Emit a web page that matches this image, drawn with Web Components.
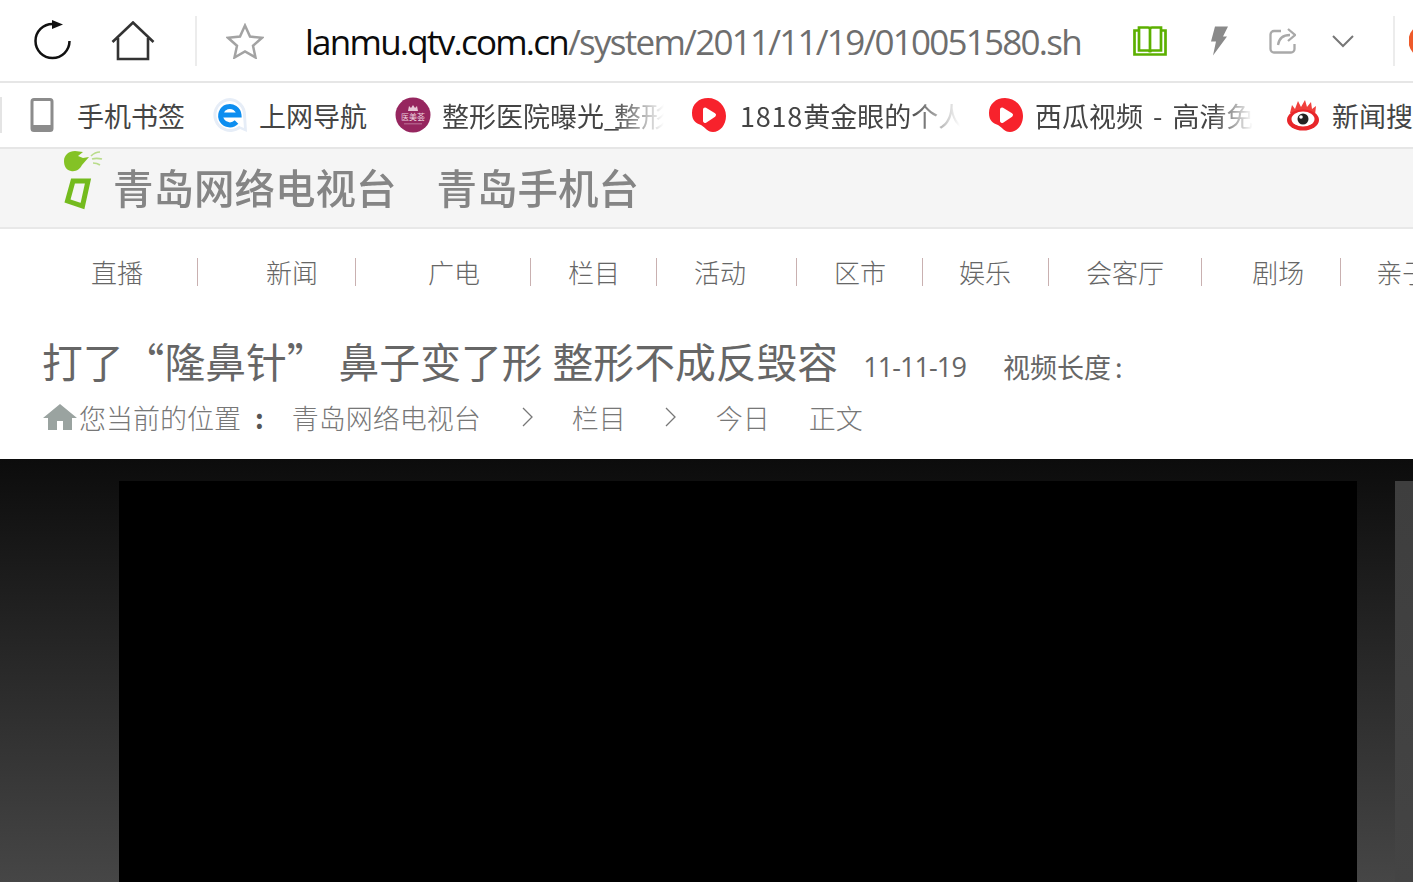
<!DOCTYPE html>
<html lang="zh-CN">
<head>
<meta charset="utf-8">
<title>青岛网络电视台</title>
<style>
html,body{margin:0;height:882px;overflow:hidden;background:#fff}
body{font-family:"Noto Sans CJK SC","Noto Sans",sans-serif}
</style>
</head>
<body>
<browser-bar></browser-bar>
<bookmark-bar>
  <book-mark label="手机书签" gap="23" width="108" after="27"><svg viewBox="0 0 24 34" width="24" height="34"><rect x="2" y="1.500" width="20" height="31" rx="2" fill="none" stroke="#8c8c8c" stroke-width="3"/><rect x="2" y="27" width="20" height="5" rx="1" fill="#8c8c8c"/></svg></book-mark>
  <book-mark label="上网导航" gap="11" width="108" after="28"><svg viewBox="0 0 36 36" width="36" height="36"><path d="M18 1a17 17 0 1 0 10 31l7 3-1-17A17 17 0 0 0 18 1z" fill="#e6edf7"/><path d="M18 4a14 14 0 1 0 9 25l5 2-1-13A14 14 0 0 0 18 4z" fill="#fff"/><path d="M8.500 18H27A9.200 9.200 0 1 0 24.500 25" fill="none" stroke="#0d8ef0" stroke-width="5"/></svg></book-mark>
  <book-mark label="整形医院曝光&lt;span style=&quot;letter-spacing:-5px&quot;&gt;_&lt;/span&gt;整形外科" gap="11" width="222" after="27" fade="50"><svg viewBox="0 0 36 36" width="36" height="36"><circle cx="18" cy="18" r="17.500" fill="#96265f"/><path d="M13 14l1-5 2 2 2-3 2 3 2-2 1 5z" fill="#e8c9d8"/><text x="18" y="23" text-anchor="middle" font-size="8" fill="#ecd0de" font-family="Noto Sans CJK SC">医美荟</text><rect x="9" y="26" width="18" height="1.500" fill="#c98fae" opacity=".5"/></svg></book-mark>
  <book-mark label="&lt;span style=&quot;letter-spacing:.8px&quot;&gt;1818&lt;/span&gt;黄金眼的个人" gap="13" width="220" after="28" fade="50"><svg viewBox="0 0 36 38" width="36" height="38"><path d="M17 2C27 2 35 10 35 20C35 29 29 36 22 36C16 36 14 31 10 29C5 27 1 25 1 17C1 8 8 2 17 2z" fill="#f7222c"/><path d="M14 13.500l9 5.500-9 6z" fill="#fff" stroke="#fff" stroke-width="4" stroke-linejoin="round"/></svg></book-mark>
  <book-mark label="西瓜视频 - 高清免费" gap="11" width="218" after="33" fade="40"><svg viewBox="0 0 36 38" width="36" height="38"><path d="M17 2C27 2 35 10 35 20C35 29 29 36 22 36C16 36 14 31 10 29C5 27 1 25 1 17C1 8 8 2 17 2z" fill="#f7222c"/><path d="M14 13.500l9 5.500-9 6z" fill="#fff" stroke="#fff" stroke-width="4" stroke-linejoin="round"/></svg></book-mark>
  <book-mark label="新闻搜索" gap="12" width="108" after="0"><svg viewBox="0 0 34 32" width="34" height="32"><path d="M4 14L6 6l3 4 3-8 3 6 4-7 2 7 4-5 1 7 4-3-1 9z" fill="#f0403c"/><ellipse cx="17" cy="21" rx="16" ry="10.500" fill="#e8262a"/><ellipse cx="17" cy="20" rx="11.500" ry="7.500" fill="#fff"/><circle cx="17" cy="20" r="5.500" fill="#222"/><circle cx="15" cy="18" r="1.800" fill="#fff"/></svg></book-mark>
</bookmark-bar>
<logo-bar></logo-bar>
<site-nav></site-nav>
<article-head></article-head>
<video-stage></video-stage>

<script>
class BrowserBar extends HTMLElement{
  constructor(){
    super();
    this.attachShadow({mode:"open"}).innerHTML=`
    <style>
    :host{display:flex;align-items:center;height:81px;border-bottom:2px solid #e6e6e6;background:#fff;overflow:hidden}
    svg{flex:none;display:block}
    .sep{flex:none;width:2px;height:50px;background:#ececec}
    .url{flex:none;width:776px;margin-left:41px;padding-top:2px;overflow:hidden;white-space:nowrap;font:35px/48px "Open Sans","Noto Sans",sans-serif;letter-spacing:-1.750px;color:#0c0c0c}
    .url span{color:#6e6e6e}
    </style>
    <svg style="margin-left:34px" width="38" height="42" viewBox="0 0 38 42"><path d="M18.500 4A17 17 0 1 0 35.500 21" fill="none" stroke="#111" stroke-width="2.500"/><path d="M18 0l11 4.500L18 9z" fill="#111"/></svg>
    <svg style="margin-left:39px" width="44" height="40" viewBox="0 0 44 40"><path d="M1.500 21L22 1.500 42.500 21M7 17v21h30V17" fill="none" stroke="#333" stroke-width="2.600"/></svg>
    <div class="sep" style="margin-left:40px"></div>
    <svg style="margin-left:29px" width="38" height="36" viewBox="0 0 38 36"><path d="M19 2.500l5 11 12 1.300-9 8 2.500 11.700L19 28.500 8.500 34.500 11 22.800l-9-8 12-1.300z" fill="none" stroke="#a3a3a3" stroke-width="2.500"/></svg>
    <div class="url">lanmu.qtv.com.cn<span>/system/2011/11/19/010051580.shtml</span></div>
    <svg style="margin-left:52px" width="34" height="30" viewBox="0 0 34 30"><path d="M6 4.500V1.500h9c1 0 2 .6 2 2 0-1.400 1-2 2-2h9v3M6 4.500H1.500v24H32.500v-24H28M6 4.500v20h9c1 0 2 1 2 2 0-1 1-2 2-2h9v-20M17 3.500v23" fill="none" stroke="#5cb000" stroke-width="2.700"/></svg>
    <svg style="margin-left:43px" width="18" height="30" viewBox="0 0 18 30"><path d="M5 .500h13l-5 10h4L3 29.500l3-14H1z" fill="#8a8a8a"/></svg>
    <svg style="margin-left:41px" width="27" height="27" viewBox="0 0 27 27"><path d="M12 4H5a3.500 3.500 0 0 0-3.500 3.500V22A3.500 3.500 0 0 0 5 25.500h17a3.500 3.500 0 0 0 3.500-3.500v-5" fill="none" stroke="#a9a9a9" stroke-width="2.300"/><path d="M9 18c1-7 6-10 12-10" fill="none" stroke="#a9a9a9" stroke-width="2.300"/><path d="M19 2l7 6-7 6" fill="none" stroke="#a9a9a9" stroke-width="2.300"/></svg>
    <svg style="margin-left:36px" width="22" height="14" viewBox="0 0 22 14"><path d="M1 2l10 10L21 2" fill="none" stroke="#777" stroke-width="2"/></svg>
    <div class="sep" style="margin-left:39px"></div>
    <svg style="margin-left:14px;flex:none" width="20" height="34" viewBox="0 0 20 34"><circle cx="17" cy="17" r="15" fill="none" stroke="#ee5a2a" stroke-width="5"/></svg>`;
  }
}

class BookmarkBar extends HTMLElement{
  constructor(){
    super();
    this.attachShadow({mode:"open"}).innerHTML=`
    <style>
    :host{display:flex;align-items:center;height:64px;border-bottom:2px solid #e6e6e6;background:#fff;overflow:hidden;white-space:nowrap}
    .sep{flex:none;width:2px;height:36px;background:#e4e4e4;margin-right:28px}
    </style>
    <div class="sep"></div><slot></slot>`;
  }
}

class BookMark extends HTMLElement{
  constructor(){
    super();
    this.attachShadow({mode:"open"});
  }
  connectedCallback(){
    let fade=this.getAttribute("fade");
    let mask=fade?`-webkit-mask-image:linear-gradient(to right,#000 calc(100% - ${fade}px),transparent);mask-image:linear-gradient(to right,#000 calc(100% - ${fade}px),transparent);`:"";
    this.shadowRoot.innerHTML=`
    <style>
    :host{display:flex;flex:none;align-items:center;margin-right:${this.getAttribute("after")}px}
    .txt{flex:none;overflow:hidden;margin-left:${this.getAttribute("gap")}px;padding-top:2px;width:${this.getAttribute("width")}px;font-size:27px;line-height:40px;word-spacing:4px;color:#444;${mask}}
    ::slotted(svg){flex:none;display:block}
    </style>
    <slot></slot><div class="txt">${this.getAttribute("label")}</div>`;
  }
}

class LogoBar extends HTMLElement{
  constructor(){
    super();
    this.attachShadow({mode:"open"}).innerHTML=`
    <style>
    :host{display:flex;align-items:flex-start;height:78px;border-bottom:2px solid #e8e8e8;background:#f5f5f5;overflow:hidden;white-space:nowrap}
    svg{flex:none;margin:1px 0 0 61px}
    .t{flex:none;margin-top:13px;font-size:40.500px;line-height:50px;color:#858585;font-weight:500;filter:blur(.6px)}
    </style>
    <svg width="44" height="62" viewBox="0 0 44 62"><path d="M3 11C3 5 8 1 14 1c3 0 5 1 8 1l-5 4 5 2 6-1-7 8c-2 4-6 7-11 6C5 20 3 16 3 11z" fill="#84c225"/><path d="M30 6c2-2 5-4 9-4M31 9c3-1 6-1 10 0M32 13c2 0 4 0 7 2" fill="none" stroke="#b9dc8a" stroke-width="1.700"/><path d="M12 31L27 31 21.500 56 6.500 51z" fill="none" stroke="#74bb1e" stroke-width="5"/></svg>
    <div class="t" style="margin-left:8px">青岛网络电视台</div>
    <div class="t" style="margin-left:40px">青岛手机台</div>`;
  }
}

class SiteNav extends HTMLElement{
  constructor(){
    super();
    let items=[["直播",91,54],["新闻",68,37],["广电",72,50],["栏目",37,36],["活动",37,50],["区市",37,36],["娱乐",36,37],["会客厅",37,37],["剧场",50,36],["亲子",35,0]];
    let html=items.map(([t,l,r],i)=>`<a style="margin-left:${l}px;padding-right:${r}px" class="${i<items.length-1?"bar":""}">${t}</a>`).join("");
    this.attachShadow({mode:"open"}).innerHTML=`
    <style>
    :host{display:flex;align-items:center;height:86px;overflow:hidden;white-space:nowrap;background:#fff}
    a{flex:none;display:block;font-size:26px;line-height:28px;font-weight:300;color:#666;box-sizing:content-box}
    a.bar{border-right:1px solid #c9b0b0}
    </style>${html}`;
  }
}

class ArticleHead extends HTMLElement{
  constructor(){
    super();
    this.attachShadow({mode:"open"}).innerHTML=`
    <style>
    :host{display:block;height:144px;box-sizing:border-box;background:#fff;overflow:hidden;white-space:nowrap;padding-left:42px;padding-top:13px}
    .row1{display:flex;align-items:center;height:70px;color:#666}
    h1{margin:-4px 0 0;display:flex;font-size:40.800px;line-height:52px;font-weight:400;color:#666}
    h1 span{flex:none}
    .date{margin-left:25px;font:27px "Open Sans","Noto Sans",sans-serif;letter-spacing:-.9px;color:#666;padding-top:6px}
    .len{margin-left:37px;font-size:27px;color:#666;padding-top:6px}
    .len span{margin-left:4px}
    .row2{display:flex;align-items:center;height:42px;margin-top:-2px;margin-left:1px;font-size:27px;font-weight:300;color:#777}
    .row2 svg{flex:none;display:block}
    .row2 span{flex:none}
    .home{filter:blur(.5px)}
    </style>
    <div class="row1"><h1><span>打了“隆鼻针”</span><span style="margin-left:11px">鼻子变了形</span><span style="margin-left:10px">整形不成反毁容</span></h1><div class="date">11-11-19</div><div class="len">视频长度<span>:</span></div></div>
    <div class="row2">
      <svg class="home" width="34" height="26" viewBox="0 0 34 26"><path d="M17 0L0 14h5v12h9v-9h6v9h9V14h5z" fill="#9aa3a0"/></svg>
      <span style="margin-left:2px">您当前的位置</span><span style="margin-left:14px;color:#555;font-weight:700">:</span>
      <span style="margin-left:28px">青岛网络电视台</span>
      <svg style="margin-left:41px" width="11" height="20" viewBox="0 0 11 20"><path d="M1 1l9 9-9 9" fill="none" stroke="#777" stroke-width="1.300"/></svg>
      <span style="margin-left:39px">栏目</span>
      <svg style="margin-left:39px" width="11" height="20" viewBox="0 0 11 20"><path d="M1 1l9 9-9 9" fill="none" stroke="#777" stroke-width="1.300"/></svg>
      <span style="margin-left:40px">今日</span>
      <span style="margin-left:39px">正文</span>
    </div>`;
  }
}

class VideoStage extends HTMLElement{
  constructor(){
    super();
    this.attachShadow({mode:"open"}).innerHTML=`
    <style>
    :host{display:flex;height:423px;box-sizing:border-box;padding-top:22px;background:linear-gradient(#0c0c0c,#464646);overflow:hidden}
    .screen{flex:none;width:1238px;margin-left:119px;background:#000}
    .side{flex:none;width:18px;margin-left:38px;background:linear-gradient(#3e3e3e,#444)}
    </style>
    <div class="screen"></div><div class="side"></div>`;
  }
}

customElements.define("browser-bar",BrowserBar);
customElements.define("bookmark-bar",BookmarkBar);
customElements.define("book-mark",BookMark);
customElements.define("logo-bar",LogoBar);
customElements.define("site-nav",SiteNav);
customElements.define("article-head",ArticleHead);
customElements.define("video-stage",VideoStage);
</script>
</body>
</html>
